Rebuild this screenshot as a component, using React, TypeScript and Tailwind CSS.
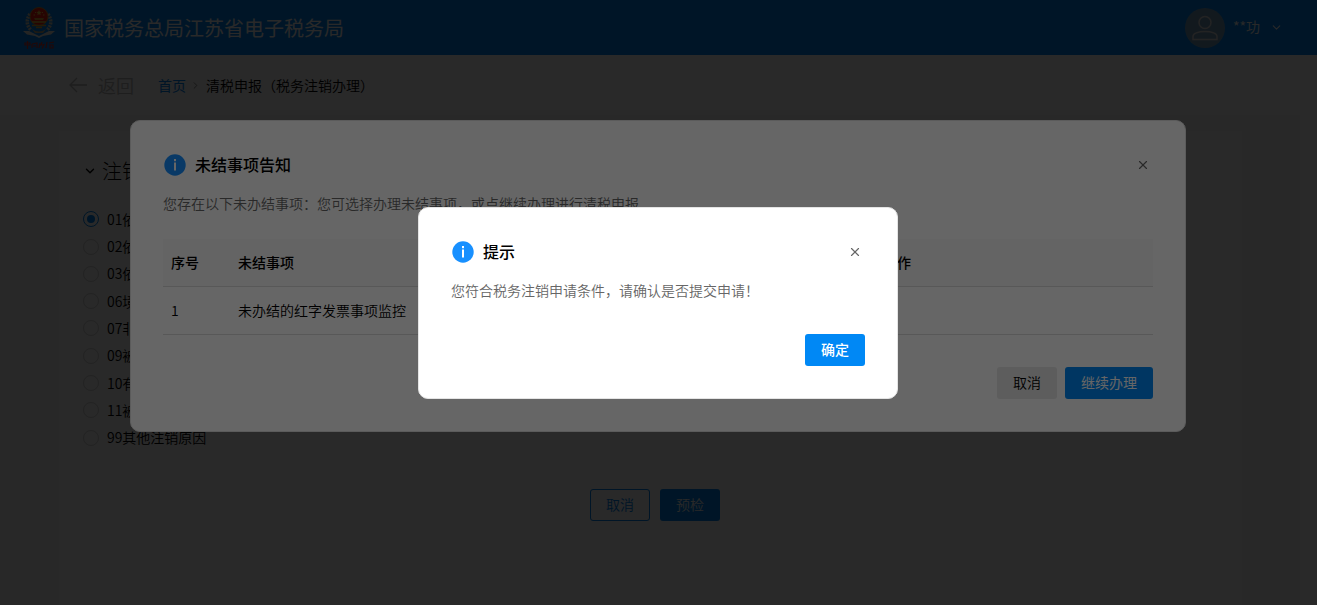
import type { ReactNode } from 'react';
import { ChevronDown, ChevronRight, X } from 'lucide-react';

const reasons = ['01依法', '02依法', '03依法', '06境外', '07非境', '09被吊', '10有关', '11被合', '99其他注销原因'];

function Emblem() {
    return (
        <svg width="32" height="44" viewBox="0 0 32 44" className="mr-[9px]">
            {/* wheat ears and ribbon */}
            <path d="M7 8 Q1 17 8 24 M25 8 Q31 17 24 24" stroke="#d2cfc0" strokeWidth="3.500" strokeDasharray="2 1" fill="none" />
            <path d="M0 25 L6 25 L16 30 L26 25 L32 25 L28 28.500 L20 30 L16 32 L12 30 L4 28.500 Z" fill="#e8e8e0" />
            <path d="M9 23 Q16 28 23 23 L20 27 H12 Z" fill="#b7a580" />
            <circle cx="16" cy="10.500" r="9" fill="#f51a13" stroke="#d08b25" strokeWidth="1" />
            <path d="M16 4 l.8 1.800 2 .2 -1.500 1.300 .4 2 -1.700 -1 -1.700 1 .4 -2 -1.500 -1.300 2 -.2z" fill="#f5c83a" />
            <path d="M10.500 9h1.500M20 9h1.500M12 6.500h1M19 6.500h1" stroke="#f5c83a" />
            <path d="M11 12h10l-1 2h-8z M9 15h14v2H9z" fill="#e3a432" />
            <path d="M9 19.500h14M13 21.500h6" stroke="#e3a432" strokeWidth="1.500" />
            {/* brush lettering strokes */}
            <path d="M2 37h5v2H2zM4.500 35v8M9 38l5-1v5M9 38v4M10 40h3M17 37l-1 5M19 36l-1 3 3-.5-2 4M24 36l-1 6M26 37l5-1M27 39h3v3h-3z" stroke="#d03430" strokeWidth="1.200" fill="none" />
        </svg>
    );
}

function InfoIcon() {
    return (
        <svg width="22" height="22" viewBox="0 0 22 22">
            <circle cx="11" cy="11" r="10.700" fill="#1890ff" />
            <rect x="10" y="5" width="2" height="2.200" fill="#fff" />
            <rect x="10" y="8.500" width="2" height="8" fill="#fff" />
        </svg>
    );
}

function Modal({ title, className, children }: { title: string; className: string; children: ReactNode }) {
    return (
        <div className="absolute inset-0 bg-black/60 pr-px">
            <div className={`mx-auto flex flex-col rounded-[10px] border border-[#e4e4e4] bg-white px-8 pb-8 ${className}`}>
                <div className="mt-[33px] flex h-[22px] items-center">
                    <div className="ml-px">
                        <InfoIcon />
                    </div>
                    <h2 className="ml-[9px] pb-0.5 text-base font-medium text-black">{title}</h2>
                    <X size={14} strokeWidth={2} className="mr-[3px] ml-auto text-[#666]" />
                </div>
                {children}
            </div>
        </div>
    );
}

export default function App() {
    return (
        <div className="relative flex h-[605px] w-[1317px] flex-col overflow-hidden bg-white text-sm font-[350] text-black [font-family:'Noto_Sans_CJK_SC',sans-serif]">
            <header className="flex h-[55px] shrink-0 items-center bg-[#0088f5] pr-[34px] pl-[23px] text-white">
                <Emblem />
                <h1 className="text-xl font-normal">国家税务总局江苏省电子税务局</h1>
                <div className="ml-auto flex h-10 w-10 items-center justify-center rounded-full bg-[#aaa]/70">
                    <svg width="26" height="26" viewBox="0 0 26 26" fill="none" stroke="#ddd" strokeWidth="1.500">
                        <circle cx="13" cy="7.500" r="6" />
                        <path d="M1 24.500v-3c0-3 5-5 12-5s12 2 12 5v3z" />
                    </svg>
                </div>
                <span className="ml-2 w-[28px] pb-[3px] font-normal whitespace-nowrap">**功</span>
                <ChevronDown size={13} strokeWidth={2} className="ml-[9px]" />
            </header>

            <div className="flex h-[60px] shrink-0 items-center pl-[66px]">
                <svg width="22" height="18" viewBox="0 0 22 18" fill="none" stroke="#bbb" strokeWidth="1.300" className="ml-0.5">
                    <path d="M9 2 2 9l7 7M2 9h17" />
                </svg>
                <span className="ml-2 text-lg text-[#bbb]">返回</span>
                <span className="ml-6 font-normal text-[#0088f5]">首页</span>
                <ChevronRight size={11} className="mr-[5px] ml-[4px] text-[#888]" />
                <span>清税申报（税务注销办理）</span>
            </div>

            <main className="mr-[17px] flex-1 bg-[#fafafa] pt-4 pr-[58px] pl-[59px]">
                <div className="h-full bg-white pt-6 pl-6">
                    <h2 className="flex h-8 items-center text-xl font-light">
                        <ChevronDown size={14} strokeWidth={2.3} className="mr-[5px]" />
                        注销原因
                    </h2>
                    <div className="mt-[18.6px]">
                        {reasons.map((reason, i) => (
                            <div key={reason} className="flex h-[27.3px] items-center">
                                <span className={`flex h-4 w-4 items-center justify-center rounded-full border ${i === 0 ? 'border-[#0088f5]' : 'border-[#d9d9d9]'}`}>
                                    {i === 0 && <span className="h-2 w-2 rounded-full bg-[#0088f5]" />}
                                </span>
                                <span className="ml-2 pb-px">{reason}</span>
                            </div>
                        ))}
                    </div>
                    <div className="mt-[37.4px] ml-[507px] flex gap-2.5">
                        <button className="h-8 w-[60px] rounded-[3px] border border-[#0088f5] pb-0.5 text-[#0088f5]">取消</button>
                        <button className="h-8 w-[60px] rounded-[3px] bg-[#0088f5] pb-0.5 text-white">预检</button>
                    </div>
                </div>
            </main>

            <Modal title="未结事项告知" className="mt-[120px] h-[312px] w-[1056px]">
                <p className="mt-4 leading-[22px] text-[#666]">您存在以下未办结事项：您可选择办理未结事项，或点继续办理进行清税申报</p>
                <div className="mt-[25px]">
                    <div className="flex h-12 items-center border-b border-[#ddd] bg-[#fafafa] pb-px pl-2 font-medium">
                        <span className="w-[67px]">序号</span>
                        <span className="w-[645px]">未结事项</span>
                        <span>操作</span>
                    </div>
                    <div className="flex h-12 items-center border-b border-[#ddd] pb-0.5 pl-2">
                        <span className="w-[67px]">1</span>
                        <span>未办结的红字发票事项监控</span>
                    </div>
                </div>
                <div className="mt-auto flex justify-end gap-2">
                    <button className="h-8 w-[60px] rounded-[3px] bg-[#e8e8e8] pb-0.5">取消</button>
                    <button className="h-8 w-[88px] rounded-[3px] bg-[#0088f5] pb-0.5 font-normal text-white">继续办理</button>
                </div>
            </Modal>

            <Modal title="提示" className="mt-[207px] h-[192px] w-[480px]">
                <p className="mt-4 leading-[22px] text-[#666]">您符合税务注销申请条件，请确认是否提交申请！</p>
                <div className="mt-auto flex justify-end">
                    <button className="h-8 w-[60px] rounded-[3px] bg-[#0088f5] pb-0.5 font-medium text-white">确定</button>
                </div>
            </Modal>
        </div>
    );
}
